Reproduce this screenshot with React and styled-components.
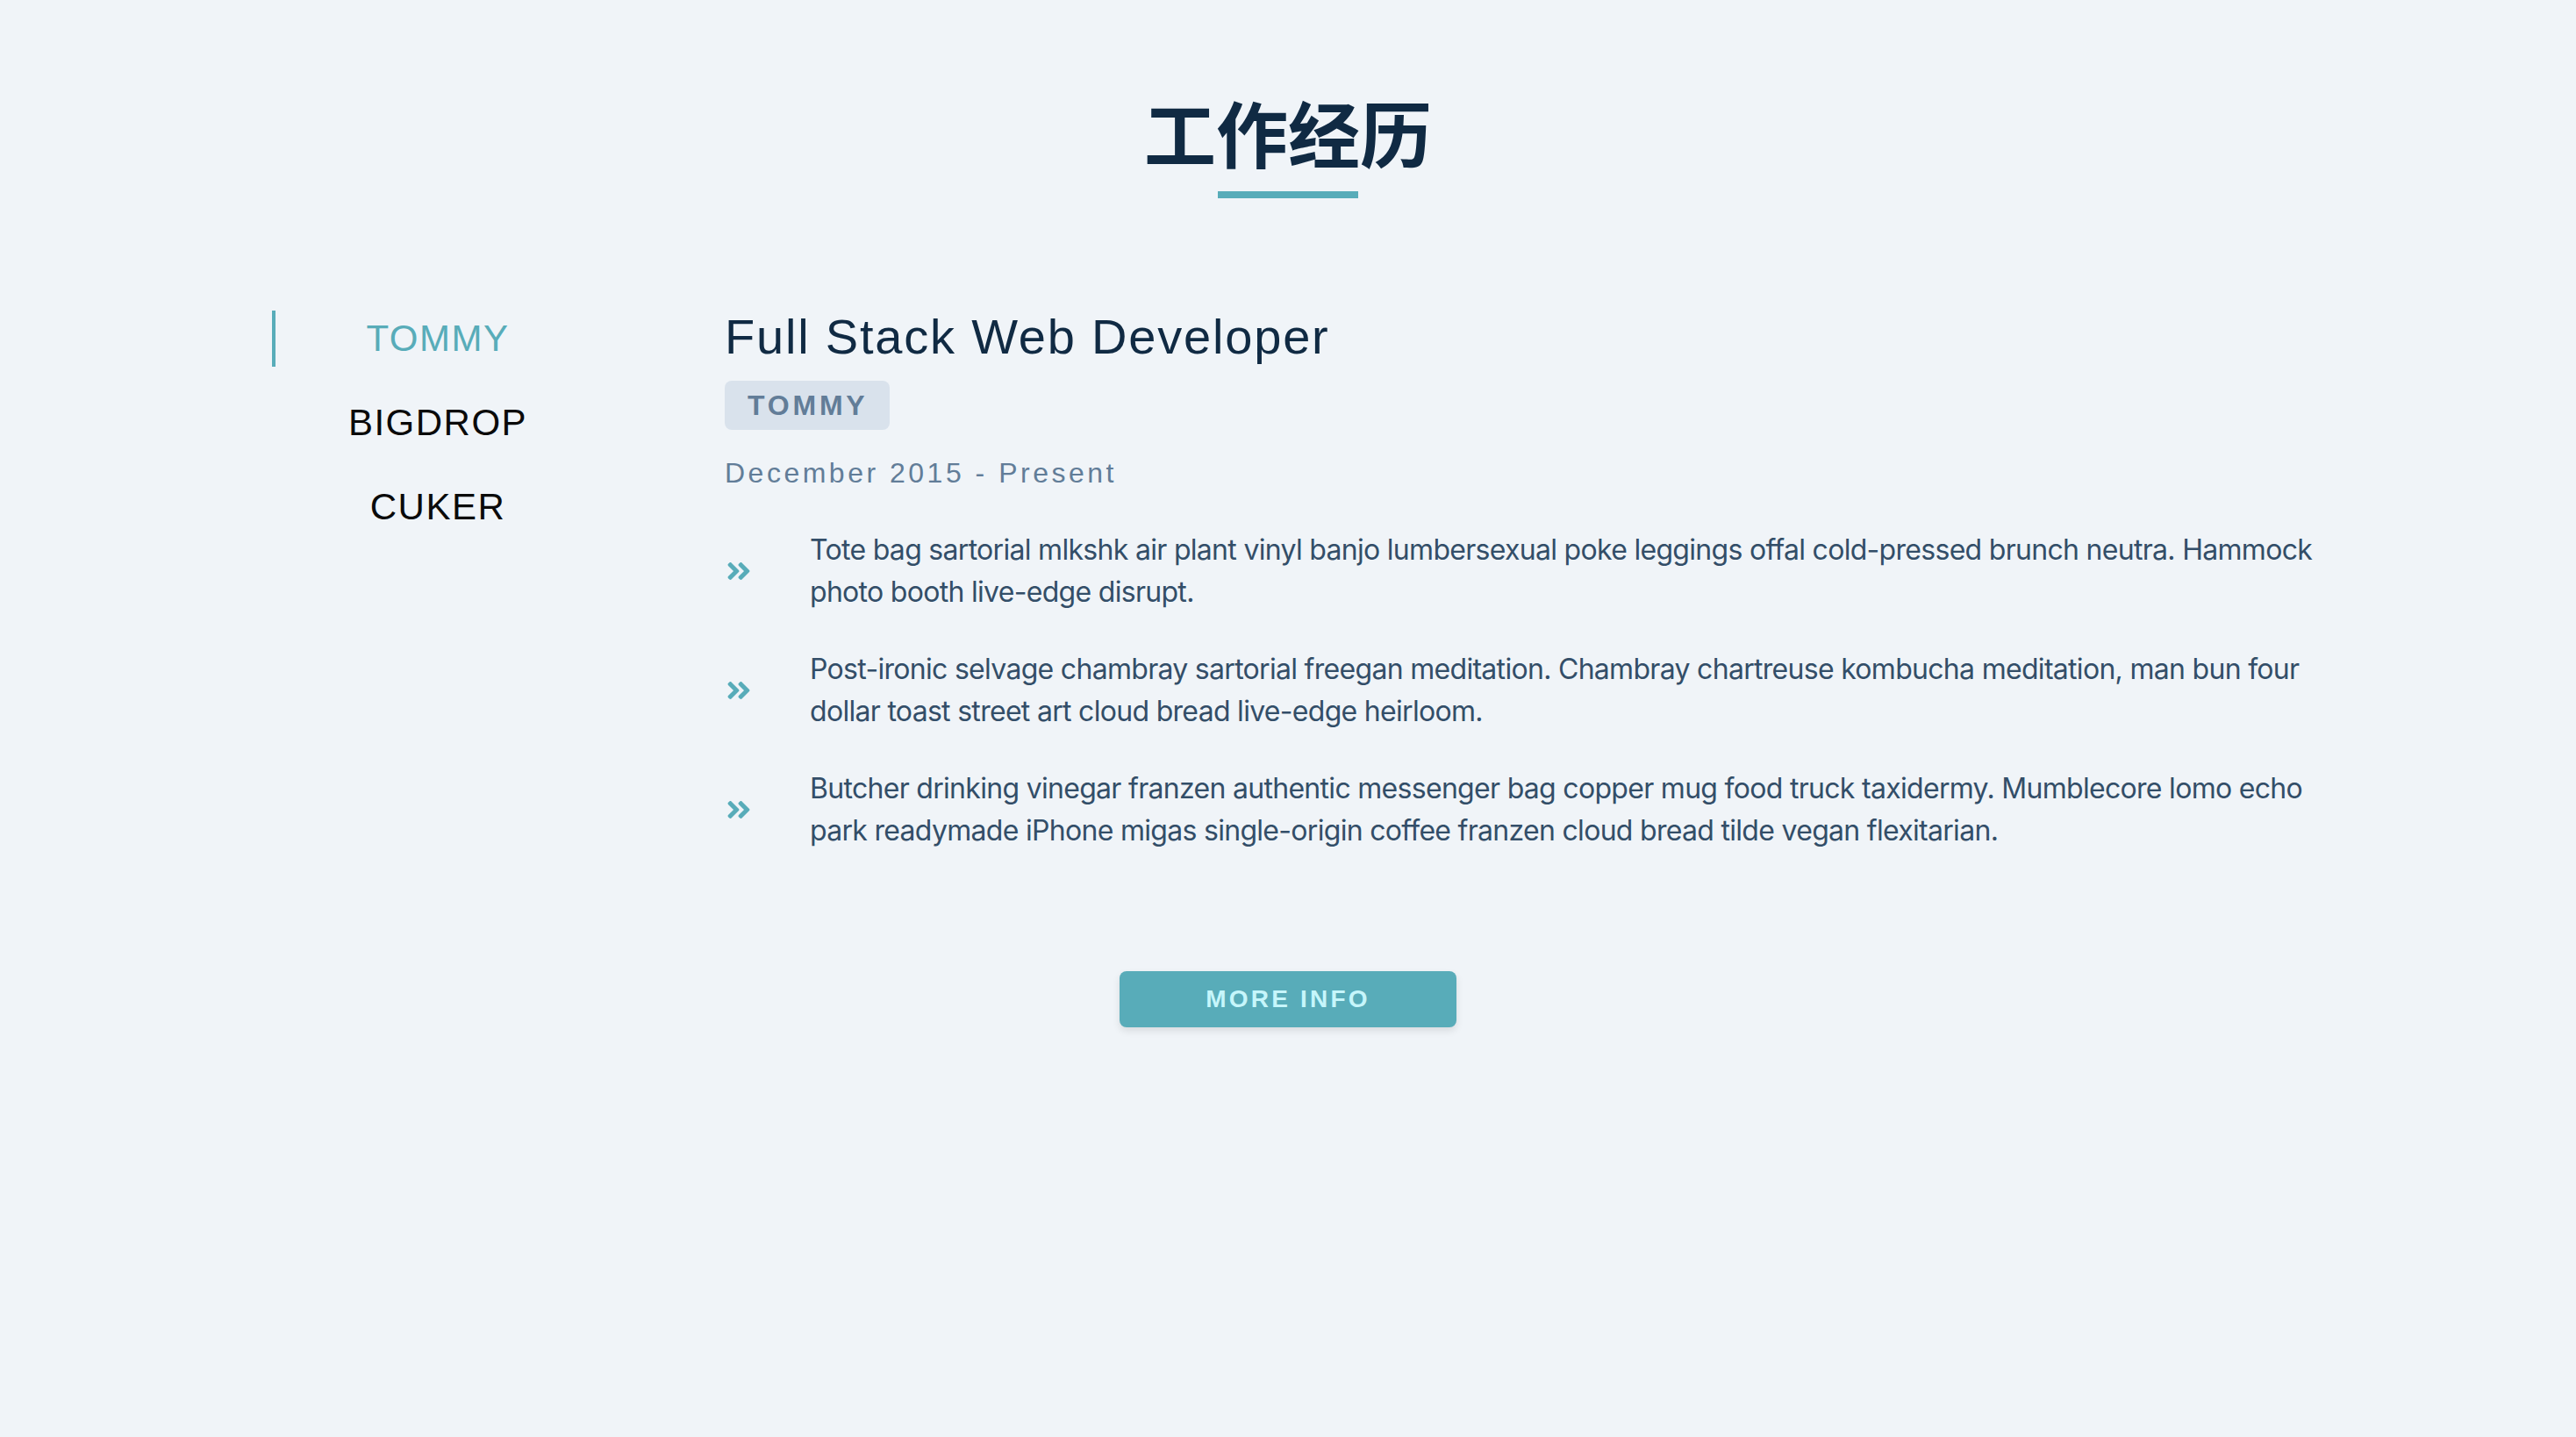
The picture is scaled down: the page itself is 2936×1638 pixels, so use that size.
import React, { useState } from 'react'
import styled, { createGlobalStyle } from 'styled-components'
import { FaAngleDoubleRight } from 'react-icons/fa'

const GlobalStyle = createGlobalStyle`
  body {
    margin: 0;
    background: #f0f4f8;
    font-family: Inter, "Noto Sans", sans-serif;
  }
  * { box-sizing: border-box; }
`

const jobs = [
  {
    company: 'tommy',
    title: 'Full Stack Web Developer',
    dates: 'December 2015 - Present',
    duties: [
      'Tote bag sartorial mlkshk air plant vinyl banjo lumbersexual poke leggings offal cold-pressed brunch neutra. Hammock photo booth live-edge disrupt.',
      'Post-ironic selvage chambray sartorial freegan meditation. Chambray chartreuse kombucha meditation, man bun four dollar toast street art cloud bread live-edge heirloom.',
      'Butcher drinking vinegar franzen authentic messenger bag copper mug food truck taxidermy. Mumblecore lomo echo park readymade iPhone migas single-origin coffee franzen cloud bread tilde vegan flexitarian.',
    ],
  },
  { company: 'bigdrop', title: 'Front-End Engineer', dates: 'May 2015 - December 2015', duties: [] },
  { company: 'cuker', title: 'Engineering Intern', dates: 'May 2014 - September 2015', duties: [] },
]

const Page = styled.main`
  min-height: 100vh;
  padding-top: 109px;
`

const Header = styled.header`
  display: flex;
  flex-direction: column;
  align-items: center;
`

const Title = styled.h2`
  margin: 0;
  font-family: "Noto Sans CJK SC", sans-serif;
  font-size: 82px;
  line-height: 82px;
  font-weight: 700;
  color: #102a43;
`

const Underline = styled.div`
  width: 160px;
  height: 8px;
  margin-top: 27px;
  background: #58acb9;
`

const JobsCenter = styled.section`
  display: flex;
  width: 2380px;
  margin: 128px auto 0;
  padding-left: 32px;
`

const Nav = styled.div`
  display: flex;
  flex-direction: column;
  gap: 32px;
  width: 374px;
  flex-shrink: 0;
`

const NavButton = styled.button`
  height: 64px;
  padding: 0;
  border: none;
  border-left: 4px solid ${p => (p.$active ? '#58acb9' : 'transparent')};
  background: transparent;
  font-family: "Liberation Sans", Arial, sans-serif;
  font-size: 42px;
  letter-spacing: 1.5px;
  text-transform: uppercase;
  color: ${p => (p.$active ? '#58acb9' : '#0a0a0a')};
  cursor: pointer;
`

const Article = styled.article`
  flex: 1;
  margin-left: 142px;
`

const JobTitle = styled.h3`
  margin: 0;
  font-family: "Liberation Sans", Arial, sans-serif;
  font-size: 56px;
  line-height: 1.08;
  font-weight: 400;
  letter-spacing: 1.8px;
  color: #102a43;
`

const Company = styled.h4`
  display: inline-flex;
  align-items: center;
  height: 56px;
  margin: 20px 0 0;
  padding: 0 24px 0 26px;
  border-radius: 8px;
  background: #d9e2ec;
  font-family: "Liberation Sans", Arial, sans-serif;
  font-size: 32px;
  font-weight: 700;
  letter-spacing: 3.8px;
  text-transform: uppercase;
  color: #627d98;
`

const Dates = styled.p`
  margin: 25px 0 0;
  font-family: "Liberation Sans", Arial, sans-serif;
  font-size: 32px;
  line-height: 48px;
  letter-spacing: 3.5px;
  color: #627d98;
`

const Duties = styled.ul`
  display: flex;
  flex-direction: column;
  gap: 40px;
  margin: 40px 0 0;
  padding: 0;
  list-style: none;
`

const Duty = styled.li`
  display: flex;
  align-items: center;
`

const DutyIcon = styled.span`
  display: flex;
  width: 97px;
  flex-shrink: 0;
  color: #58acb9;
`

const DutyText = styled.p`
  margin: 0;
  font-size: 32px;
  line-height: 48px;
  letter-spacing: -0.7px;
  color: #334e68;
`

const ButtonRow = styled.div`
  display: flex;
  justify-content: center;
  margin-top: 136px;
`

const MoreButton = styled.button`
  width: 384px;
  height: 64px;
  border: none;
  border-radius: 8px;
  background: #58acb9;
  box-shadow: 0 4px 8px rgba(0, 0, 0, 0.1);
  font-family: "Liberation Sans", Arial, sans-serif;
  font-size: 28px;
  font-weight: 700;
  letter-spacing: 3.2px;
  text-transform: uppercase;
  color: #c6f6fb;
  cursor: pointer;
`

export default function App() {
  const [value, setValue] = useState(0)
  const job = jobs[value]

  return (
    <Page>
      <GlobalStyle />
      <Header>
        <Title>工作经历</Title>
        <Underline />
      </Header>
      <JobsCenter>
        <Nav>
          {jobs.map((j, i) => (
            <NavButton key={j.company} $active={i === value} onClick={() => setValue(i)}>
              {j.company}
            </NavButton>
          ))}
        </Nav>
        <Article>
          <JobTitle>{job.title}</JobTitle>
          <Company>{job.company}</Company>
          <Dates>{job.dates}</Dates>
          <Duties>
            {job.duties.map((d, i) => (
              <Duty key={i}>
                <DutyIcon><FaAngleDoubleRight size={32} /></DutyIcon>
                <DutyText>{d}</DutyText>
              </Duty>
            ))}
          </Duties>
        </Article>
      </JobsCenter>
      <ButtonRow>
        <MoreButton>more info</MoreButton>
      </ButtonRow>
    </Page>
  )
}
